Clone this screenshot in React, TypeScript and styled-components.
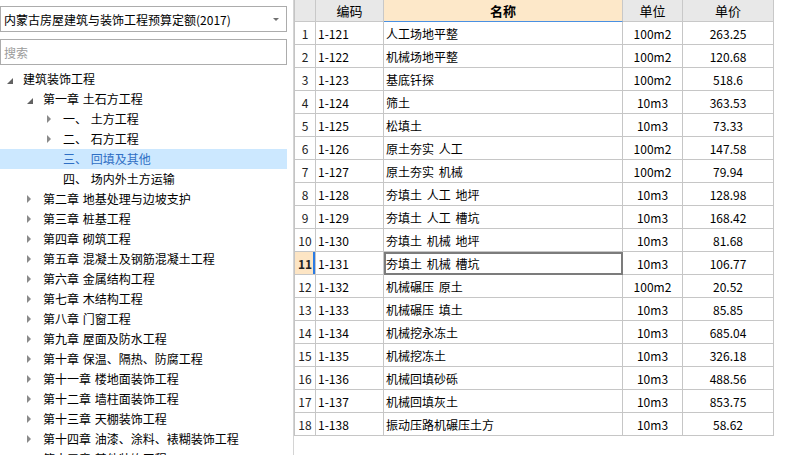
import React from 'react';
import styled, { createGlobalStyle, css } from 'styled-components';

const GlobalStyle = createGlobalStyle`
  html, body {
    margin: 0;
    padding: 0;
    background: #fff;
    overflow: hidden;
  }
  body {
    font-family: "Noto Sans CJK SC", "Noto Sans", sans-serif;
    font-size: 12px;
    color: #000;
  }
`;

type CaretState = 'open' | 'closed' | 'leaf';

interface TreeItem {
  label: string;
  level: number;
  caret: CaretState;
  selected?: boolean;
}

const treeItems: TreeItem[] = [
  { label: '建筑装饰工程', level: 0, caret: 'open' },
  { label: '第一章 土石方工程', level: 1, caret: 'open' },
  { label: '一、  土方工程', level: 2, caret: 'closed' },
  { label: '二、  石方工程', level: 2, caret: 'closed' },
  { label: '三、  回填及其他', level: 2, caret: 'leaf', selected: true },
  { label: '四、  场内外土方运输', level: 2, caret: 'leaf' },
  { label: '第二章 地基处理与边坡支护', level: 1, caret: 'closed' },
  { label: '第三章 桩基工程', level: 1, caret: 'closed' },
  { label: '第四章 砌筑工程', level: 1, caret: 'closed' },
  { label: '第五章 混凝土及钢筋混凝土工程', level: 1, caret: 'closed' },
  { label: '第六章 金属结构工程', level: 1, caret: 'closed' },
  { label: '第七章 木结构工程', level: 1, caret: 'closed' },
  { label: '第八章 门窗工程', level: 1, caret: 'closed' },
  { label: '第九章 屋面及防水工程', level: 1, caret: 'closed' },
  { label: '第十章 保温、隔热、防腐工程', level: 1, caret: 'closed' },
  { label: '第十一章 楼地面装饰工程', level: 1, caret: 'closed' },
  { label: '第十二章 墙柱面装饰工程', level: 1, caret: 'closed' },
  { label: '第十三章 天棚装饰工程', level: 1, caret: 'closed' },
  { label: '第十四章 油漆、涂料、裱糊装饰工程', level: 1, caret: 'closed' },
  { label: '第十五章 其他装饰工程', level: 1, caret: 'closed' },
];

const rows: [string, string, string, string][] = [
  ['1-121', '人工场地平整', '100m2', '263.25'],
  ['1-122', '机械场地平整', '100m2', '120.68'],
  ['1-123', '基底钎探', '100m2', '518.6'],
  ['1-124', '筛土', '10m3', '363.53'],
  ['1-125', '松填土', '10m3', '73.33'],
  ['1-126', '原土夯实 人工', '100m2', '147.58'],
  ['1-127', '原土夯实 机械', '100m2', '79.94'],
  ['1-128', '夯填土 人工 地坪', '10m3', '128.98'],
  ['1-129', '夯填土 人工 槽坑', '10m3', '168.42'],
  ['1-130', '夯填土 机械 地坪', '10m3', '81.68'],
  ['1-131', '夯填土 机械 槽坑', '10m3', '106.77'],
  ['1-132', '机械碾压 原土', '100m2', '20.52'],
  ['1-133', '机械碾压 填土', '10m3', '85.85'],
  ['1-134', '机械挖永冻土', '10m3', '685.04'],
  ['1-135', '机械挖冻土', '10m3', '326.18'],
  ['1-136', '机械回填砂砾', '10m3', '488.56'],
  ['1-137', '机械回填灰土', '10m3', '853.75'],
  ['1-138', '振动压路机碾压土方', '10m3', '58.62'],
];

const ACTIVE_ROW = 10;

const App = () => {
  return (
    <Page>
      <GlobalStyle />
      <Sidebar>
        <Select>
          <span>内蒙古房屋建筑与装饰工程预算定额(2017)</span>
          <SelectArrow />
        </Select>
        <Search placeholder="搜索" />
        <Tree>
          {treeItems.map((item) => (
            <TreeRow key={item.label} level={item.level} selected={item.selected}>
              <CaretBox>
                {item.caret !== 'leaf' && <Caret state={item.caret} />}
              </CaretBox>
              <TreeLabel>{item.label}</TreeLabel>
            </TreeRow>
          ))}
        </Tree>
      </Sidebar>
      <Splitter />
      <Grid>
        <HeaderRow>
          <HeadCell />
          <HeadCell>编码</HeadCell>
          <HeadCell active>名称</HeadCell>
          <HeadCell>单位</HeadCell>
          <HeadCell>单价</HeadCell>
        </HeaderRow>
        {rows.map((r, i) => (
          <BodyRow key={r[0]}>
            <NumCell active={i === ACTIVE_ROW}>{i + 1}</NumCell>
            <Cell>{r[0]}</Cell>
            <Cell focused={i === ACTIVE_ROW}>{r[1]}</Cell>
            <Cell align="center">{r[2]}</Cell>
            <Cell align="center">{r[3]}</Cell>
          </BodyRow>
        ))}
      </Grid>
    </Page>
  );
};

const Page = styled.div`
  display: flex;
  height: 455px;
  overflow: hidden;
`;

const Sidebar = styled.div`
  width: 287px;
  padding: 6px 6px 0 0;
  display: flex;
  flex-direction: column;
  flex-shrink: 0;
  overflow: hidden;
`;

const Select = styled.div`
  flex-shrink: 0;
  height: 26px;
  box-sizing: border-box;
  border: 1px solid #acacac;
  display: flex;
  align-items: center;
  justify-content: space-between;
  padding: 0 7px 0 3px;
  font-size: 12px;
  white-space: nowrap;
`;

const SelectArrow = styled.span`
  width: 0;
  height: 0;
  border-left: 3px solid transparent;
  border-right: 3px solid transparent;
  border-top: 3px solid #707070;
`;

const Search = styled.input`
  flex-shrink: 0;
  margin: 7px 0 0;
  height: 26px;
  box-sizing: border-box;
  border: 1px solid #acacac;
  padding: 0 3px;
  font-family: "Noto Sans CJK SC", sans-serif;
  font-size: 12px;
  outline: none;
  &::placeholder {
    color: #9b9b9b;
  }
`;

const Tree = styled.div`
  flex-shrink: 0;
  margin-top: 4px;
  display: flex;
  flex-direction: column;
`;

const TreeRow = styled.div<{ level: number; selected?: boolean }>`
  flex-shrink: 0;
  height: 20px;
  display: flex;
  align-items: center;
  padding-left: ${(p) => 7 + p.level * 20}px;
  white-space: nowrap;
  color: ${(p) => (p.selected ? '#2f6fc4' : '#000')};
  background: ${(p) => (p.selected ? '#cce8ff' : 'transparent')};
`;

const CaretBox = styled.span`
  width: 16px;
  height: 20px;
  display: flex;
  align-items: center;
  flex-shrink: 0;
`;

const Caret = styled.span<{ state: CaretState }>`
  width: 0;
  height: 0;
  ${(p) =>
    p.state === 'open'
      ? css`
          margin-top: 3px;
          border-left: 6px solid transparent;
          border-bottom: 6px solid #626262;
        `
      : css`
          border-top: 4px solid transparent;
          border-bottom: 4px solid transparent;
          border-left: 4px solid #8a8a8a;
        `}
`;

const TreeLabel = styled.span`
  font-size: 12px;
  line-height: 20px;
  word-spacing: 1px;
`;

const Splitter = styled.div`
  width: 1px;
  flex-shrink: 0;
  background: #d4d4d4;
`;

const COLUMNS = '21px 68px 239px 60px 91px';

const Grid = styled.div`
  align-self: flex-start;
  border-left: 1px solid #c4c4c4;
  display: flex;
  flex-direction: column;
  font-family: "Noto Sans CJK SC", sans-serif;
  font-size: 12px;
`;

const HeaderRow = styled.div`
  display: grid;
  grid-template-columns: ${COLUMNS};
  height: 22px;
`;

const HeadCell = styled.div<{ active?: boolean }>`
  box-sizing: border-box;
  display: flex;
  align-items: center;
  justify-content: center;
  border-right: 1px solid #c8c8c8;
  border-bottom: 1px solid ${(p) => (p.active ? '#4a90e2' : '#c8c8c8')};
  background: ${(p) => (p.active ? '#fde8c9' : '#e8e8e8')};
  font-weight: ${(p) => (p.active ? 'bold' : 'normal')};
  font-size: 13px;
`;

const BodyRow = styled.div`
  display: grid;
  grid-template-columns: ${COLUMNS};
  height: 23px;
`;

const Cell = styled.div<{ align?: 'left' | 'center'; focused?: boolean }>`
  box-sizing: border-box;
  display: flex;
  align-items: center;
  justify-content: ${(p) => (p.align === 'center' ? 'center' : 'flex-start')};
  padding-left: ${(p) => (p.align === 'center' ? 0 : 2)}px;
  border-right: 1px solid #c6c6c6;
  border-bottom: 1px solid #c6c6c6;
  white-space: nowrap;
  word-spacing: 2px;
  ${(p) =>
    p.focused &&
    css`
      outline: 2px solid #7c7c7c;
      outline-offset: -2px;
    `}
`;

const NumCell = styled.div<{ active?: boolean }>`
  box-sizing: border-box;
  display: flex;
  align-items: center;
  justify-content: center;
  border-right: 1px solid #c6c6c6;
  border-bottom: 1px solid #c6c6c6;
  color: #222;
  ${(p) =>
    p.active &&
    css`
      background: #fde5c4;
      font-weight: bold;
      box-shadow: inset -2px 0 0 #2a7be4;
    `}
`;

export default App;
